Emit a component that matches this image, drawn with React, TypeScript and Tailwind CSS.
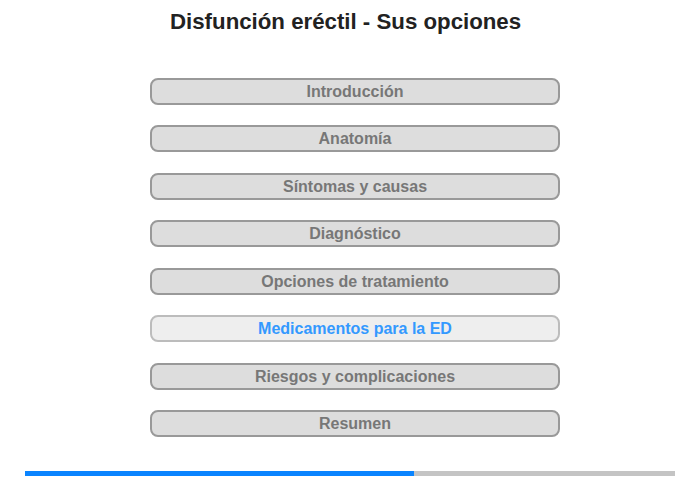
const items = [
  "Introducción",
  "Anatomía",
  "Síntomas y causas",
  "Diagnóstico",
  "Opciones de tratamiento",
  "Medicamentos para la ED",
  "Riesgos y complicaciones",
  "Resumen",
];

const active = 5;

export default function App() {
  return (
    <div className="w-[700px] h-[480px] bg-white font-['Liberation_Sans',Arial,sans-serif] overflow-hidden">
      <h1 className="pt-[10px] pl-[170px] w-[560px] text-[22.25px] leading-[24px] font-bold text-[#222]">
        Disfunción eréctil - Sus opciones
      </h1>

      <div className="mt-[44px] ml-[150px] w-[410px] flex flex-col gap-[20.43px]">
        {items.map((label, i) => (
          <button
            key={label}
            className={
              i === active
                ? "h-[27px] rounded-[8px] border-2 border-[#bcbcbc] bg-[#eeeeee] text-[16px] leading-[23px] font-bold text-[#3399ff]"
                : "h-[27px] rounded-[8px] border-2 border-[#999999] bg-[#dddddd] text-[16px] leading-[23px] font-bold text-[#777777]"
            }
          >
            {label}
          </button>
        ))}
      </div>

      <div className="mt-[34px] ml-[25px] w-[650px] h-[5px] bg-[#c4c4c4] flex">
        <div className="w-[389px] h-full bg-[#0a84ff]" />
      </div>
    </div>
  );
}
